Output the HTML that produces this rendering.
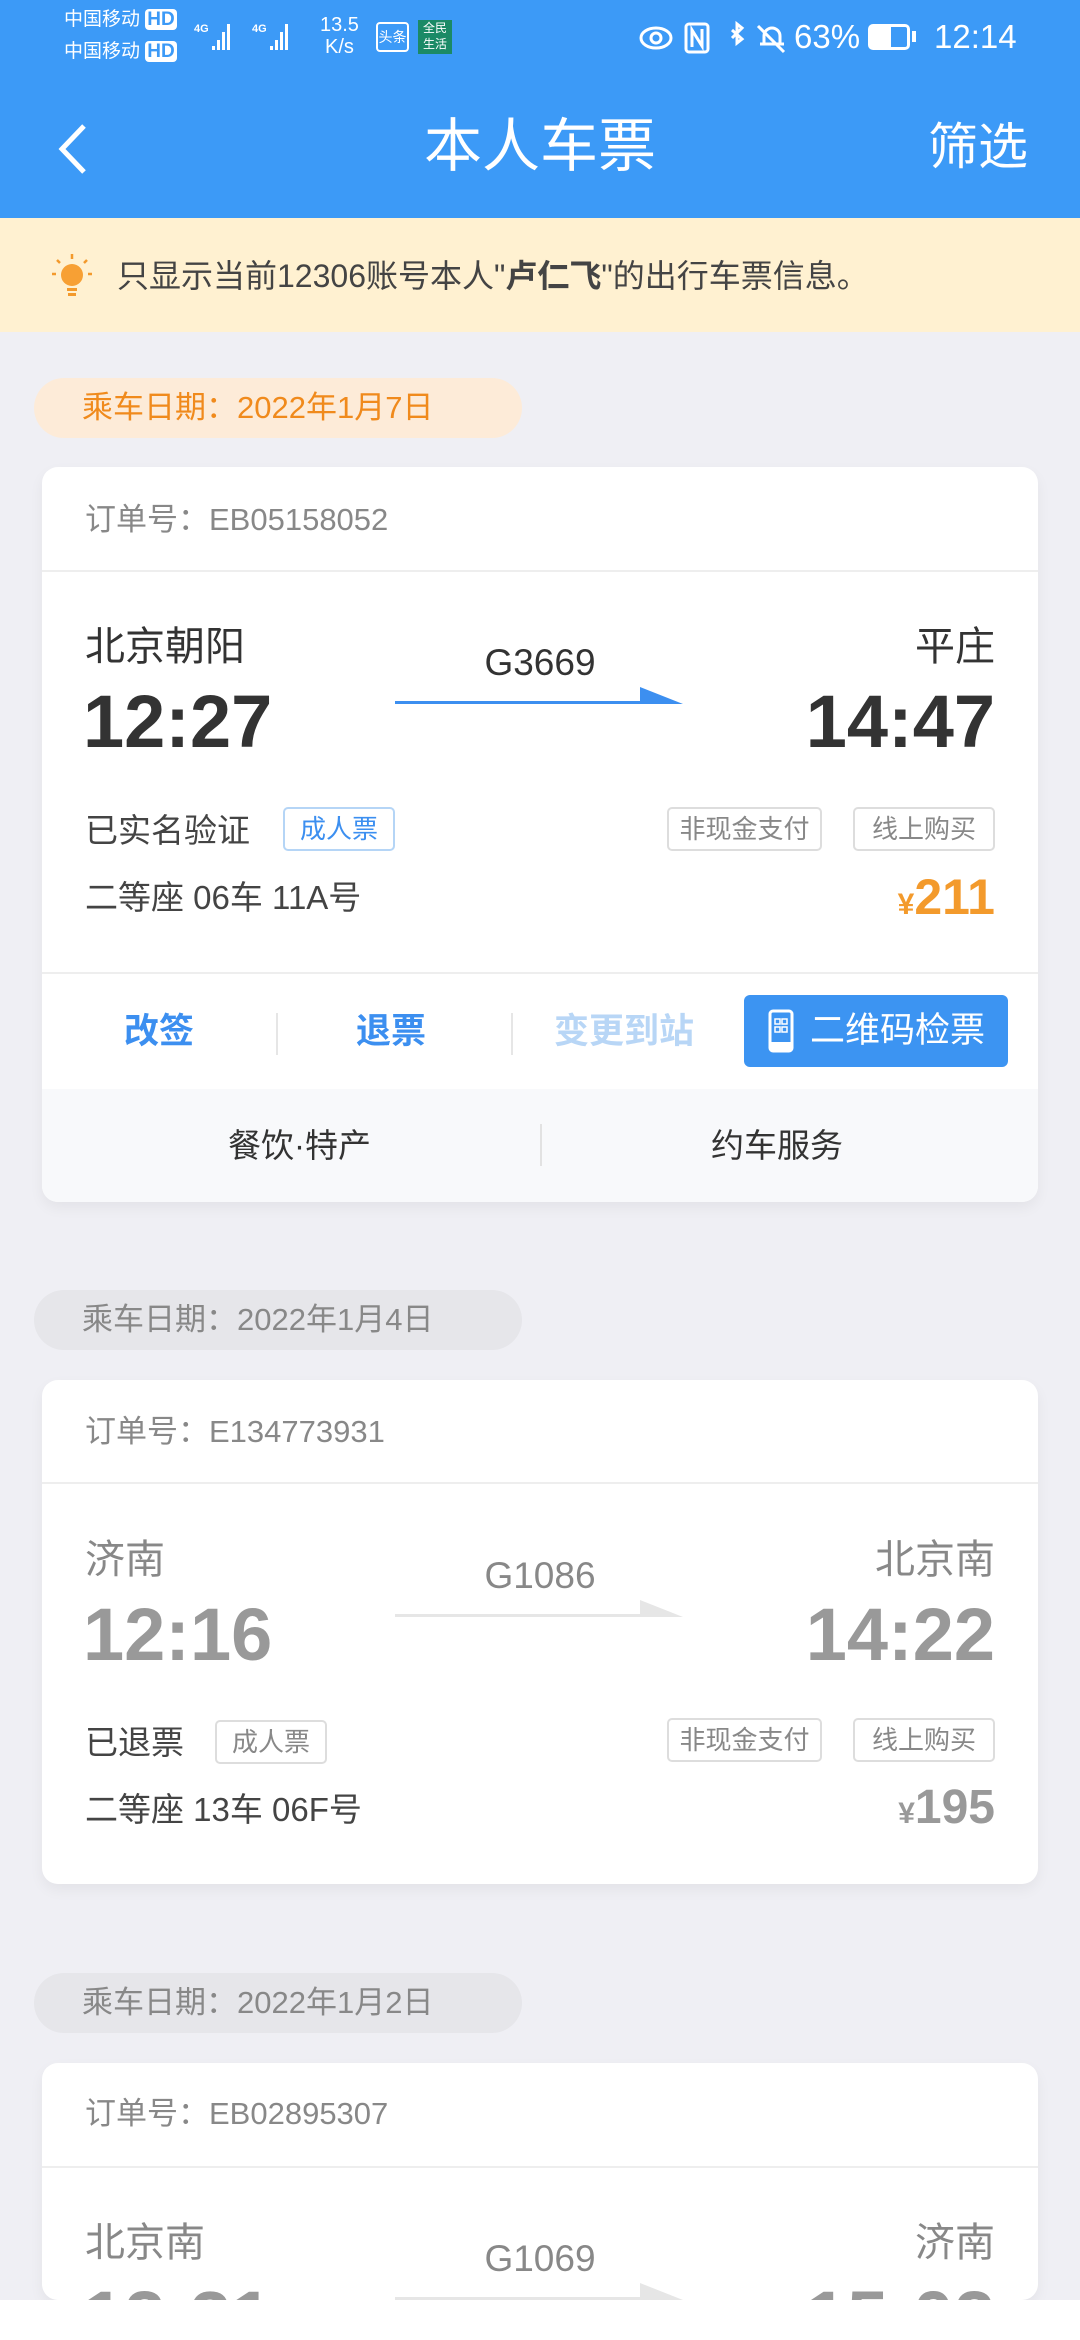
<!DOCTYPE html>
<html><head><meta charset="utf-8"><style>
*{margin:0;padding:0;box-sizing:border-box}
html,body{width:1080px;height:2340px;overflow:hidden}
body{background:#fff;font-family:"Liberation Sans","Noto Sans CJK SC",sans-serif;position:relative}
.a{position:absolute;white-space:nowrap;line-height:1}
#bg{position:absolute;left:0;top:0;width:1080px;height:2300px;background:#efeff4;overflow:hidden}
.card{position:absolute;left:42px;width:996px;background:#fff;border-radius:16px;box-shadow:0 6px 14px rgba(0,0,0,0.05);overflow:hidden}
.pill{position:absolute;left:34px;width:488px;height:60px;border-radius:30px;background:#e6e6ea;color:#888;font-size:31px;line-height:60px;padding-left:48px}
.tag{position:absolute;height:44px;border:2px solid #ddd;border-radius:5px;color:#888;font-size:26px;line-height:40px;text-align:center;background:#fff}
.div{position:absolute;left:0;width:100%;height:2px;background:#eee}
</style></head><body>
<div id="bg">
<div style="position:absolute;left:0;top:0;width:1080px;height:218px;background:#3c9af7"></div>
<div class="a" style="left:64px;top:10px;font-size:19px;color:#fff">中国移动 <span style="background:#fff;color:#3c9af7;border-radius:4px;padding:0 2px;font-weight:bold">HD</span></div>
<div class="a" style="left:64px;top:42px;font-size:19px;color:#fff">中国移动 <span style="background:#fff;color:#3c9af7;border-radius:4px;padding:0 2px;font-weight:bold">HD</span></div>
<svg style="position:absolute;left:194px;top:18px" width="120" height="36"><g fill="#fff"><text x="0" y="14" font-size="11" font-weight="bold" font-family="Liberation Sans">4G</text><rect x="18" y="28" width="3" height="4"/><rect x="23" y="22" width="3" height="10"/><rect x="28" y="14" width="3" height="18"/><rect x="33" y="6" width="3" height="26"/><text x="58" y="14" font-size="11" font-weight="bold" font-family="Liberation Sans">4G</text><rect x="76" y="28" width="3" height="4"/><rect x="81" y="22" width="3" height="10"/><rect x="86" y="14" width="3" height="18"/><rect x="91" y="6" width="3" height="26"/></g></svg>
<div class="a" style="left:320px;top:14px;font-size:20px;color:#fff;text-align:center;line-height:22px">13.5<br>K/s</div>
<div class="a" style="left:376px;top:22px;width:33px;height:30px;border:2px solid #fff;border-radius:4px;color:#fff;font-size:14px;text-align:center;line-height:26px">头条</div>
<div class="a" style="left:418px;top:20px;width:34px;height:34px;background:#1b8a66;color:#fff;font-size:12px;text-align:center;line-height:16px">全民<br>生活</div>
<svg style="position:absolute;left:636px;top:20px" width="240" height="36"><g fill="none" stroke="#fff" stroke-width="3"><ellipse cx="20" cy="18" rx="15" ry="10"/><circle cx="20" cy="18" r="5"/><rect x="50" y="4" width="22" height="28" rx="3"/><path d="M56 27V10l10 16V9"/><path d="M96 10l10 9-5 4V4l5 4-10 10"/><path d="M124 24h24M128 24V16a8 8 0 0 1 16 0v8M122 6l26 26"/></g></svg>
<div class="a" style="left:794px;top:20px;font-size:33px;color:#fff">63%</div>
<div class="a" style="left:868px;top:24px;width:42px;height:26px;border:3px solid #fff;border-radius:5px"><div style="width:20px;height:100%;background:#fff"></div></div>
<div class="a" style="left:912px;top:31px;width:4px;height:11px;background:#fff"></div>
<div class="a" style="left:934px;top:20px;font-size:33px;color:#fff">12:14</div>
<svg style="position:absolute;left:54px;top:122px" width="36" height="54"><path d="M30 4L8 27l22 23" fill="none" stroke="#fff" stroke-width="5"/></svg>
<div class="a" style="left:0;width:1080px;text-align:center;top:118px;font-size:58px;color:#fff">本人车票</div>
<div class="a" style="left:928px;top:122px;font-size:50px;color:#fff">筛选</div>
<div style="position:absolute;left:0;top:218px;width:1080px;height:114px;background:#fff1d1"></div>
<svg style="position:absolute;left:48px;top:252px" width="48" height="46"><g stroke="#f39a2c" stroke-width="2.5" fill="none"><path d="M24 2v5M9 8l3 3M39 8l-3 3M4 22h4M40 22h4"/></g><circle cx="24" cy="23" r="11" fill="#f7a034"/><rect x="19" y="36" width="10" height="3" fill="#f39a2c"/><rect x="20" y="41" width="8" height="3" fill="#f39a2c"/></svg>
<div class="a" style="left:117px;top:260px;font-size:32px;color:#444">只显示当前12306账号本人"<b>卢仁飞</b>"的出行车票信息。</div>

<div class="pill" style="top:378px;background:#fdebd8;color:#f08a1c">乘车日期：2022年1月7日</div>
<div class="card" style="top:467px;height:735px">
 <div class="a" style="left:43px;top:37px;font-size:31px;color:#888">订单号：EB05158052</div>
 <div class="div" style="top:103px"></div>
 <div class="a" style="left:43px;top:160px;font-size:40px;color:#333">北京朝阳</div>
 <div class="a" style="right:43px;top:160px;font-size:40px;color:#333">平庄</div>
 <div class="a" style="left:0;width:996px;text-align:center;top:177px;font-size:37px;color:#333">G3669</div>
 <svg style="position:absolute;left:353px;top:218px" width="290" height="24"><path d="M0 19h288L245 2v14H0z" fill="#3c8ff0"/></svg>
 <div class="a" style="left:41px;top:218px;font-size:74px;font-weight:bold;color:#333">12:27</div>
 <div class="a" style="right:43px;top:218px;font-size:74px;font-weight:bold;color:#333">14:47</div>
 <div class="a" style="left:43px;top:347px;font-size:33px;color:#444">已实名验证</div>
 <div class="tag" style="left:241px;top:340px;width:112px;border-color:#b5d5f6;color:#3c8ff0">成人票</div>
 <div class="tag" style="right:216px;top:340px;width:155px">非现金支付</div>
 <div class="tag" style="right:43px;top:340px;width:142px">线上购买</div>
 <div class="a" style="left:43px;top:414px;font-size:33px;color:#444">二等座 06车 11A号</div>
 <div class="a" style="right:43px;top:405px;font-size:50px;font-weight:bold;color:#f39a2c"><span style="font-size:30px">¥</span>211</div>
 <div class="div" style="top:505px"></div>
 <div class="a" style="left:82px;top:547px;font-size:35px;color:#3c8ff0;font-weight:bold">改签</div>
 <div class="a" style="left:234px;top:546px;width:2px;height:42px;background:#e6e6e6"></div>
 <div class="a" style="left:314px;top:547px;font-size:35px;color:#3c8ff0;font-weight:bold">退票</div>
 <div class="a" style="left:469px;top:546px;width:2px;height:42px;background:#e6e6e6"></div>
 <div class="a" style="left:512px;top:547px;font-size:35px;color:#b8d6f6;font-weight:bold">变更到站</div>
 <div class="a" style="left:702px;top:528px;width:264px;height:72px;background:#3c94f2;border-radius:6px"></div>
 <svg style="position:absolute;left:726px;top:542px" width="26" height="44"><rect x="2" y="2" width="22" height="40" rx="3" fill="none" stroke="#fff" stroke-width="3"/><rect x="2" y="33" width="22" height="9" fill="#fff"/><g fill="none" stroke="#fff" stroke-width="1.5"><rect x="7" y="10" width="5" height="5"/><rect x="14" y="10" width="5" height="5"/><rect x="7" y="18" width="5" height="5"/><path d="M14 18h5v5h-5z"/></g></svg>
 <div class="a" style="left:768px;top:546px;font-size:35px;color:#fff">二维码检票</div>
 <div style="position:absolute;left:0;top:622px;width:996px;height:113px;background:#f8f9fb"></div>
 <div class="a" style="left:186px;top:662px;font-size:33px;color:#333">餐饮·特产</div>
 <div class="a" style="left:498px;top:657px;width:2px;height:42px;background:#e2e2e2"></div>
 <div class="a" style="left:669px;top:662px;font-size:33px;color:#333">约车服务</div>
</div>

<div class="pill" style="top:1290px">乘车日期：2022年1月4日</div>
<div class="card" style="top:1380px;height:504px">
 <div class="a" style="left:43px;top:36px;font-size:31px;color:#888">订单号：E134773931</div>
 <div class="div" style="top:102px"></div>
 <div class="a" style="left:43px;top:160px;font-size:40px;color:#888">济南</div>
 <div class="a" style="right:43px;top:160px;font-size:40px;color:#888">北京南</div>
 <div class="a" style="left:0;width:996px;text-align:center;top:177px;font-size:37px;color:#888">G1086</div>
 <svg style="position:absolute;left:353px;top:218px" width="290" height="24"><path d="M0 19h288L245 2v14H0z" fill="#e6e6e6"/></svg>
 <div class="a" style="left:41px;top:218px;font-size:74px;font-weight:bold;color:#999">12:16</div>
 <div class="a" style="right:43px;top:218px;font-size:74px;font-weight:bold;color:#999">14:22</div>
 <div class="a" style="left:43px;top:346px;font-size:33px;color:#444">已退票</div>
 <div class="tag" style="left:173px;top:340px;width:112px">成人票</div>
 <div class="tag" style="right:216px;top:338px;width:155px">非现金支付</div>
 <div class="tag" style="right:43px;top:338px;width:142px">线上购买</div>
 <div class="a" style="left:43px;top:413px;font-size:33px;color:#444">二等座 13车 06F号</div>
 <div class="a" style="right:43px;top:404px;font-size:48px;font-weight:bold;color:#999"><span style="font-size:30px">¥</span>195</div>
</div>

<div class="pill" style="top:1973px">乘车日期：2022年1月2日</div>
<div class="card" style="top:2063px;height:237px">
 <div class="a" style="left:43px;top:35px;font-size:31px;color:#888">订单号：EB02895307</div>
 <div class="div" style="top:103px"></div>
 <div class="a" style="left:43px;top:160px;font-size:40px;color:#888">北京南</div>
 <div class="a" style="right:43px;top:160px;font-size:40px;color:#888">济南</div>
 <div class="a" style="left:0;width:996px;text-align:center;top:177px;font-size:37px;color:#888">G1069</div>
 <svg style="position:absolute;left:353px;top:218px" width="290" height="24"><path d="M0 19h288L245 2v14H0z" fill="#e6e6e6"/></svg>
 <div class="a" style="left:41px;top:218px;font-size:74px;font-weight:bold;color:#999">12:31</div>
 <div class="a" style="right:43px;top:218px;font-size:74px;font-weight:bold;color:#999">15:02</div>
</div>
</div>
</body></html>
